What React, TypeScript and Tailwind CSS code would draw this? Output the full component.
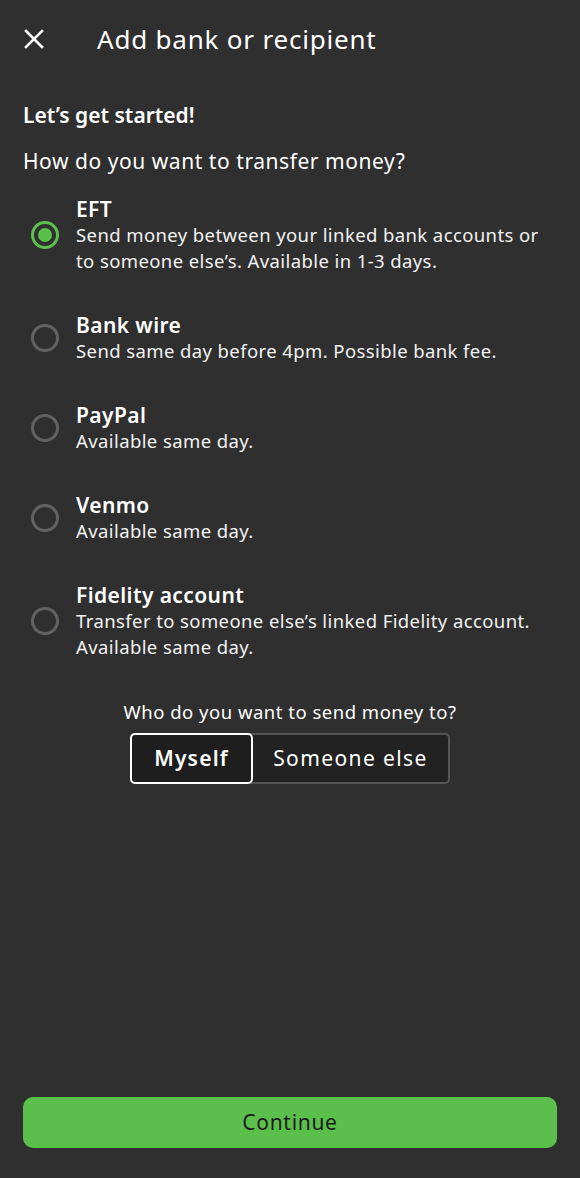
import React, { useState } from "react";

type Option = {
  key: string;
  title: string;
  desc: string;
};

const options: Option[] = [
  {
    key: "eft",
    title: "EFT",
    desc: "Send money between your linked bank accounts or to someone else’s. Available in 1-3 days.",
  },
  {
    key: "wire",
    title: "Bank wire",
    desc: "Send same day before 4pm. Possible bank fee.",
  },
  { key: "paypal", title: "PayPal", desc: "Available same day." },
  { key: "venmo", title: "Venmo", desc: "Available same day." },
  {
    key: "fidelity",
    title: "Fidelity account",
    desc: "Transfer to someone else’s linked Fidelity account. Available same day.",
  },
];

export default function App() {
  const [selected, setSelected] = useState("eft");
  const [who, setWho] = useState<"me" | "other">("me");

  return (
    <div
      className="min-h-screen w-full bg-[#2f2f2f] text-white flex flex-col"
      style={{ fontFamily: "'Noto Sans', Lato, sans-serif" }}
    >
      {/* Header */}
      <div className="flex items-center h-[78px] pl-[24px]">
        <button className="w-[20px] h-[20px] text-white">
          <svg viewBox="0 0 20 20" className="w-[20px] h-[20px]">
            <path
              d="M2 2 L18 18 M18 2 L2 18"
              stroke="currentColor"
              strokeWidth="2.6"
              strokeLinecap="square"
            />
          </svg>
        </button>
        <h1 className="ml-[53px] text-[26px] leading-none tracking-[0.8px]">
          Add bank or recipient
        </h1>
      </div>

      <div className="px-[23px] pt-[24px]">
        <div className="text-[21px] font-semibold leading-[26px]">Let’s get started!</div>
        <div className="mt-[20px] text-[21px] leading-[26px] tracking-[0.55px]">
          How do you want to transfer money?
        </div>
      </div>

      {/* Options */}
      <div className="mt-[22px] flex flex-col gap-[38px] pl-[31px] pr-[24px]">
        {options.map((o) => {
          const active = o.key === selected;
          return (
            <button
              key={o.key}
              onClick={() => setSelected(o.key)}
              className="flex items-center text-left"
            >
              <span
                className={`shrink-0 w-[28px] h-[28px] rounded-full border-[3px] flex items-center justify-center ${
                  active ? "border-[#5bbf4c]" : "border-[#626262]"
                }`}
              >
                {active && <span className="w-[14px] h-[14px] rounded-full bg-[#5bbf4c]" />}
              </span>
              <span className="ml-[17px] flex flex-col">
                <span className="text-[21px] font-semibold leading-[26px] tracking-[0.4px]">
                  {o.title}
                </span>
                <span className="text-[18.5px] leading-[26px] tracking-[0.4px] text-[#f2f2f2]">
                  {o.desc}
                </span>
              </span>
            </button>
          );
        })}
      </div>

      {/* Recipient */}
      <div className="mt-[40px] flex flex-col items-center">
        <div className="text-[18.5px] leading-[24px] tracking-[0.5px]">
          Who do you want to send money to?
        </div>
        <div className="mt-[9px] flex h-[51px] rounded-[5px] bg-[#222222] border-2 border-[#555555]">
          <button
            onClick={() => setWho("me")}
            className={`w-[123px] -m-[2px] rounded-[5px] text-[21px] tracking-[1.2px] ${
              who === "me"
                ? "border-2 border-white bg-[#1e1e1e] font-semibold"
                : "font-normal"
            }`}
          >
            Myself
          </button>
          <button
            onClick={() => setWho("other")}
            className={`w-[199px] -my-[2px] -mr-[2px] rounded-[5px] text-[21px] tracking-[1.4px] ${
              who === "other" ? "border-2 border-white bg-[#1e1e1e] font-semibold" : ""
            }`}
          >
            Someone else
          </button>
        </div>
      </div>

      <div className="flex-1" />

      <div className="px-[23px] pb-[30px]">
        <button className="w-full h-[51px] rounded-[10px] bg-[#5bbf4c] text-[#1c1c1c] text-[21px] tracking-[0.7px]">
          Continue
        </button>
      </div>
    </div>
  );
}
